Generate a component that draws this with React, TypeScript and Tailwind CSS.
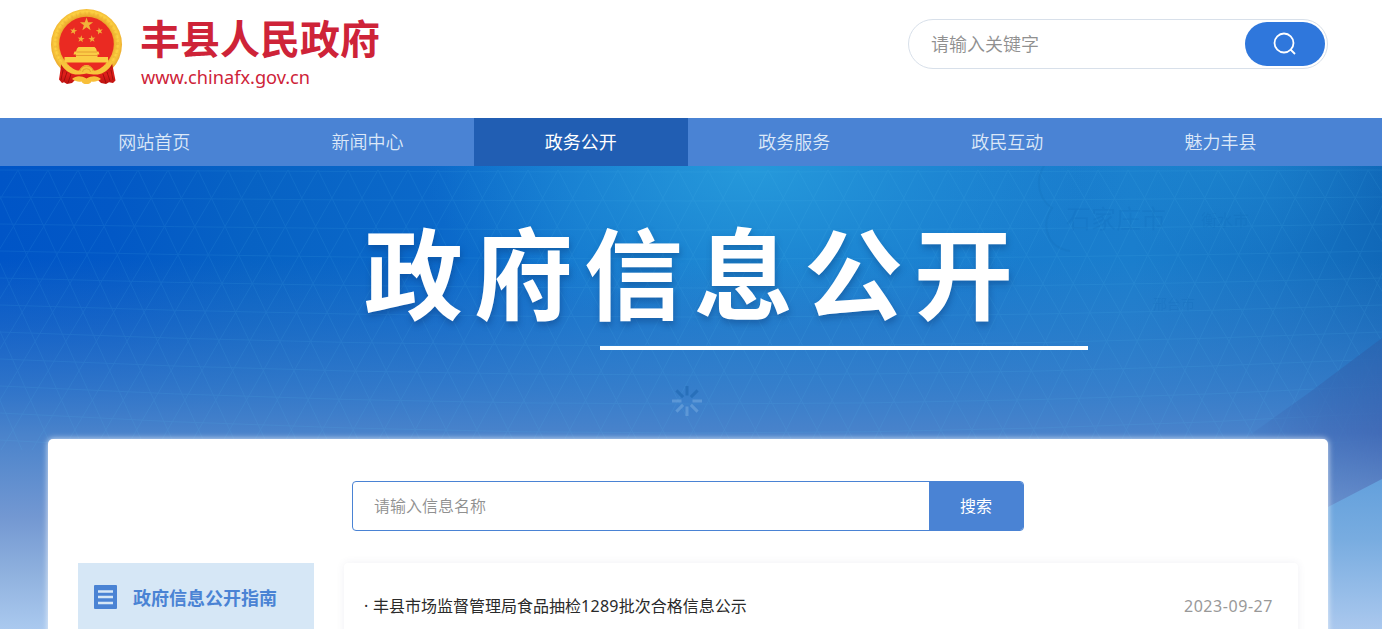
import React from "react";

const NAV = ["网站首页", "新闻中心", "政务公开", "政务服务", "政民互动", "魅力丰县"];

function star(cx: number, cy: number, r: number, rot = 0) {
  const pts: string[] = [];
  for (let i = 0; i < 10; i++) {
    const a = ((i * 36 - 90 + rot) * Math.PI) / 180;
    const q = i % 2 ? r * 0.4 : r;
    pts.push(`${(cx + q * Math.cos(a)).toFixed(2)},${(cy + q * Math.sin(a)).toFixed(2)}`);
  }
  return pts.join(" ");
}

function Emblem() {
  return (
    <svg width="72" height="76" viewBox="0 0 72 76" className="shrink-0">
      <defs>
        <radialGradient id="gold" cx="50%" cy="48%" r="51%">
          <stop offset="0.75" stopColor="#eba92c" />
          <stop offset="0.87" stopColor="#fdd243" />
          <stop offset="1" stopColor="#eba92c" />
        </radialGradient>
        <linearGradient id="drape" x1="0" y1="0" x2="0" y2="1">
          <stop offset="0" stopColor="#b5100e" />
          <stop offset="0.55" stopColor="#e01f1b" />
          <stop offset="1" stopColor="#bd1210" />
        </linearGradient>
      </defs>
      <circle cx="35.500" cy="35.500" r="35.500" fill="url(#gold)" />
      <circle cx="35.500" cy="35" r="31" fill="none" stroke="#dc9a28" strokeWidth="3" strokeDasharray="1 2.600 2 3.400" opacity="0.28" />
      <circle cx="35.500" cy="35" r="27.300" fill="#ea2a22" />
      <g fill="#f1b23a">
        <polygon points={star(35.5, 15.5, 7)} />
        <polygon points={star(22.5, 22, 3.7, 12)} />
        <polygon points={star(48.5, 22, 3.7, -12)} />
        <polygon points={star(30, 30, 3.7, 8)} />
        <polygon points={star(41, 30, 3.7, -8)} />
      </g>
      <path d="M26 39.500l1.500-1.500h16l1.500 1.500 1 3h1.500l1 3H22.500l1-3H25zM25 45.500h21.500V48H57v5.500H13.500V48H25z" fill="#fbcd45" />
      <path d="M25.500 43h20.500M24.500 46.500h22" stroke="#dd8b28" strokeWidth="0.7" />
      <path d="M14 55.300h43q-3 4-8 6.700H22q-5-2.700-8-6.700z" fill="#ea2a22" />
      <path d="M10.500 54c5.500 4 11 7 17.500 9h16c6-2 11.500-5 17-9l3.500 17.500-2.500 2.500-4-.8-3 1.800-5-1-3-3H24l-3 3-5 1-3-1.800-2 .8-3-3.500z" fill="url(#drape)" />
      <path d="M12 61l-2 10M16 63l-3 9M20 65l-3 9M60 61l2 10M56 63l3 9M52 65l3 9" stroke="#940c0b" strokeWidth="0.8" />
      <path d="M8.500 52c4 1.500 6.500 2 9 4 4.500 4 7 5.500 10.500 5.500 2-3.500 4.500-5.500 7.500-5.500s5.500 2 7.500 5.500c3.500 0 6-1.500 10.500-5.500 2.500-2 5-2.500 9-4-2.500 6-6 9.500-10 11.500-4 2.500-9 2.500-17 1-8 1.500-13 1.500-17-1-4-2-7.500-5.500-10-11.500z" fill="#f8c43c" />
      <path d="M29 62a6.500 5 0 0 1 13 0M31.500 63a4 3.300 0 0 1 8 0" fill="none" stroke="#dd9927" strokeWidth="0.8" />
      <path d="M21 70c4-3.500 9-3.500 14.500-.5 5.500-3 10.500-3 14.500.5-3.500 2.500-6.500 3-9.500 2.500-1 2-2.500 2.500-5 2.500s-4-.5-5-2.500C27.500 73 24.500 72.500 21 70z" fill="#f8bf39" />
    </svg>
  );
}

function BannerArt() {
  const rows = Array.from({ length: 11 }, (_, i) => i);
  const cols = Array.from({ length: 60 }, (_, i) => i);
  return (
    <svg className="absolute inset-0 -z-10" width="1382" height="463" viewBox="0 0 1382 463" preserveAspectRatio="none">
      <defs>
        <linearGradient id="top" x1="0" y1="0" x2="1" y2="0">
          <stop offset="0" stopColor="#0055c7" />
          <stop offset="0.08" stopColor="#0258c6" />
          <stop offset="0.18" stopColor="#0762c4" />
          <stop offset="0.32" stopColor="#0b69ca" />
          <stop offset="0.42" stopColor="#1376ce" />
          <stop offset="0.53" stopColor="#187dce" />
          <stop offset="0.68" stopColor="#187bce" />
          <stop offset="0.82" stopColor="#1a7ecd" />
          <stop offset="0.92" stopColor="#1674c4" />
          <stop offset="1" stopColor="#1068b8" />
        </linearGradient>
        <radialGradient id="glow" gradientUnits="userSpaceOnUse" cx="0" cy="0" r="1" gradientTransform="translate(755 5) scale(330 160)">
          <stop offset="0" stopColor="#2aa2df" stopOpacity="0.74" />
          <stop offset="0.5" stopColor="#2aa2df" stopOpacity="0.33" />
          <stop offset="1" stopColor="#2aa2df" stopOpacity="0" />
        </radialGradient>
        <radialGradient id="glowRight" gradientUnits="userSpaceOnUse" cx="0" cy="0" r="1" gradientTransform="translate(1230 0) scale(170 90)">
          <stop offset="0" stopColor="#1f8ed4" stopOpacity="0.4" />
          <stop offset="1" stopColor="#1f8ed4" stopOpacity="0" />
        </radialGradient>
        <linearGradient id="fade" x1="0" y1="0" x2="0" y2="1">
          <stop offset="0.2" stopColor="#4080c8" stopOpacity="0" />
          <stop offset="0.34" stopColor="#3d7cc8" stopOpacity="0.34" />
          <stop offset="0.47" stopColor="#407fca" stopOpacity="0.7" />
          <stop offset="0.58" stopColor="#4a83cb" stopOpacity="1" />
          <stop offset="0.76" stopColor="#7398d2" />
          <stop offset="0.88" stopColor="#8fb1de" />
          <stop offset="1" stopColor="#aac9ef" />
        </linearGradient>
        <linearGradient id="purple" gradientUnits="userSpaceOnUse" x1="1382" y1="172" x2="1382" y2="345">
          <stop offset="0" stopColor="#2866b2" />
          <stop offset="0.55" stopColor="#4169b5" />
          <stop offset="1" stopColor="#668dca" />
        </linearGradient>
        <linearGradient id="reveal" x1="0" y1="0" x2="1" y2="0">
          <stop offset="0" stopColor="white" stopOpacity="0" />
          <stop offset="0.65" stopColor="white" stopOpacity="0.65" />
          <stop offset="1" stopColor="white" stopOpacity="0.9" />
        </linearGradient>
        <mask id="revealMask" maskUnits="userSpaceOnUse" x="1230" y="160" width="152" height="303">
          <rect x="1230" y="160" width="152" height="303" fill="url(#reveal)" />
        </mask>
        <linearGradient id="sky" x1="0" y1="0" x2="0" y2="1">
          <stop offset="0" stopColor="#63a0dc" />
          <stop offset="0.4" stopColor="#78ace0" />
          <stop offset="1" stopColor="#aac8ee" />
        </linearGradient>
      </defs>
      <rect width="1382" height="463" fill="url(#top)" />
      <rect width="1382" height="463" fill="url(#glow)" />
      <rect width="1382" height="463" fill="url(#glowRight)" />
      <rect width="1382" height="463" fill="url(#fade)" />
      <g stroke="#5cc3f0" strokeWidth="1" fill="none" opacity="0.1">
        {rows.map((i) => (
          <path key={i} d={`M0 ${4 + i * 27} Q700 ${8 + i * 31} 1382 ${4 + i * 27}`} />
        ))}
        {cols.map((i) => (
          <path key={i} d={`M${-192 + i * 30} 4l${150 + (i - 29)} 280M${-192 + i * 30} 4l${-150 + (i - 29)} 280`} />
        ))}
      </g>
      <g fill="none" stroke="#0d62ad" opacity="0.14">
        <path d="M1044 0c-10 16-4 34 8 42-12 18-4 40 18 43" strokeWidth="2" />
      </g>
      <g fill="#0b62b0" fontFamily="'Noto Sans CJK SC', sans-serif" opacity="0.16">
        <text x="1066" y="62" fontSize="25">石家庄市</text>
        <text x="1201" y="60" fontSize="16">衡水市</text>
        <text x="1153" y="143" fontSize="14">邢台市</text>
      </g>
      <path d="M1382 172L1310 226L1240 276V463H1382z" fill="url(#purple)" mask="url(#revealMask)" />
      <path d="M1382 313L1328 341V463H1382z" fill="url(#sky)" />
    </svg>
  );
}

function Spinner() {
  return (
    <svg width="32" height="32" viewBox="-16 -16 32 32" strokeWidth="3">
      {Array.from({ length: 8 }, (_, i) => (
        <path
          key={i}
          d="M0-5.500V-15"
          transform={`rotate(${i * 45})`}
          stroke={i === 0 || i === 1 || i === 7 ? "#236bb5" : "#76aae0"}
          opacity={i === 0 || i === 1 || i === 7 ? 0.75 : 0.55}
        />
      ))}
    </svg>
  );
}

export default function App() {
  return (
    <div className="flex h-[629px] w-[1382px] flex-col overflow-hidden bg-white font-['Noto_Sans','Noto_Sans_CJK_SC',sans-serif]">
      <header className="flex h-[118px] shrink-0 items-start justify-between pr-[54px] pl-[51px]">
        <div className="flex pt-[9px]">
          <Emblem />
          <div className="flex flex-col pl-[17px] text-[#ce2338]">
            <div className="h-[57px] text-[40px] leading-[60px] font-bold whitespace-nowrap">丰县人民政府</div>
            <div className="pl-px text-[18.200px] leading-[22px]">www.chinafx.gov.cn</div>
          </div>
        </div>
        <div className="mt-[19px] flex h-[50px] w-[420px] items-center justify-between rounded-full border border-[#d8e0ea] pr-[2px] pl-[22px]">
          <span className="text-[18px] leading-[50px] font-[350] text-[#909090]">请输入关键字</span>
          <button className="flex h-11 w-20 items-center justify-center rounded-full bg-[#2f77dc]">
            <svg width="24" height="24" viewBox="0 0 24 24" fill="none" stroke="white" strokeWidth="1.800">
              <circle cx="11" cy="11" r="9.500" />
              <path d="M17.500 17.500l4.500 4.500" />
            </svg>
          </button>
        </div>
      </header>

      <nav className="flex h-12 shrink-0 bg-[#4a83d4] pl-[47.700px]">
        {NAV.map((item, i) => (
          <div
            key={item}
            className={
              i === 2
                ? "flex w-[213.500px] items-center justify-center bg-[#215eb3] text-[18px] leading-[48px] text-white"
                : "flex w-[213.200px] items-center justify-center text-[18px] leading-[48px] font-[350] text-[#dce8f8]"
            }
          >
            {item}
          </div>
        ))}
      </nav>

      <main className="relative isolate flex h-[463px] shrink-0 flex-col">
        <BannerArt />
        <h1 className="h-[180px] pt-[33px] pl-[364px] text-[99px] leading-[150px] font-bold tracking-[11px] whitespace-nowrap text-white [text-shadow:1px_4px_6px_rgba(10,50,110,0.35)]">
          政府信息公开
        </h1>
        <div className="ml-[600px] h-1 w-[488px] shrink-0 bg-white" />
        <div className="flex h-[89px] shrink-0 pt-[35px] pl-[671px]">
          <Spinner />
        </div>
        <section className="ml-12 flex h-[230px] w-[1280px] shrink-0 flex-col rounded-[5px] bg-white px-[30px] pt-[42px] shadow-[0_0_6px_rgba(255,255,255,0.8)]">
          <div className="ml-[274px] flex h-[50px] w-[672px] shrink-0 overflow-hidden rounded-[4px] border border-[#4a83d4]">
            <div className="w-[576px] pl-[21px] text-[16px] leading-[48px] font-[350] text-[#909090]">请输入信息名称</div>
            <button className="flex-1 bg-[#4a83d4] text-[16px] text-white">搜索</button>
          </div>
          <div className="mt-[32px] flex items-start gap-[30px]">
            <aside className="flex h-[70px] w-[236px] shrink-0 items-center bg-[#d6e7f6] pl-4">
              <svg className="-mt-0.5" width="23" height="24" viewBox="0 0 23 24">
                <rect width="23" height="24" rx="1" fill="#4a83d4" />
                <path d="M4 6.500h15M4 12h15M4 18h15" stroke="#d6e7f6" strokeWidth="2.400" />
              </svg>
              <span className="pl-4 text-[18px] font-bold text-[#4a83d4]">政府信息公开指南</span>
            </aside>
            <div className="flex h-[110px] w-[954px] shrink-0 items-start justify-between rounded-[4px] bg-white pt-[31px] pr-[25px] pl-5 text-[16px] leading-6 shadow-[0_0_9px_rgba(60,70,120,0.08)]">
              <a className="flex text-[#2a2a2a]">
                <span className="w-[9px]">·</span>
                <span>丰县市场监督管理局食品抽检</span>
                <span className="tracking-[0.300px]">1289</span>
                <span>批次合格信息公示</span>
              </a>
              <time className="tracking-[0.550px] text-[#999]">2023-09-27</time>
            </div>
          </div>
        </section>
      </main>
    </div>
  );
}
